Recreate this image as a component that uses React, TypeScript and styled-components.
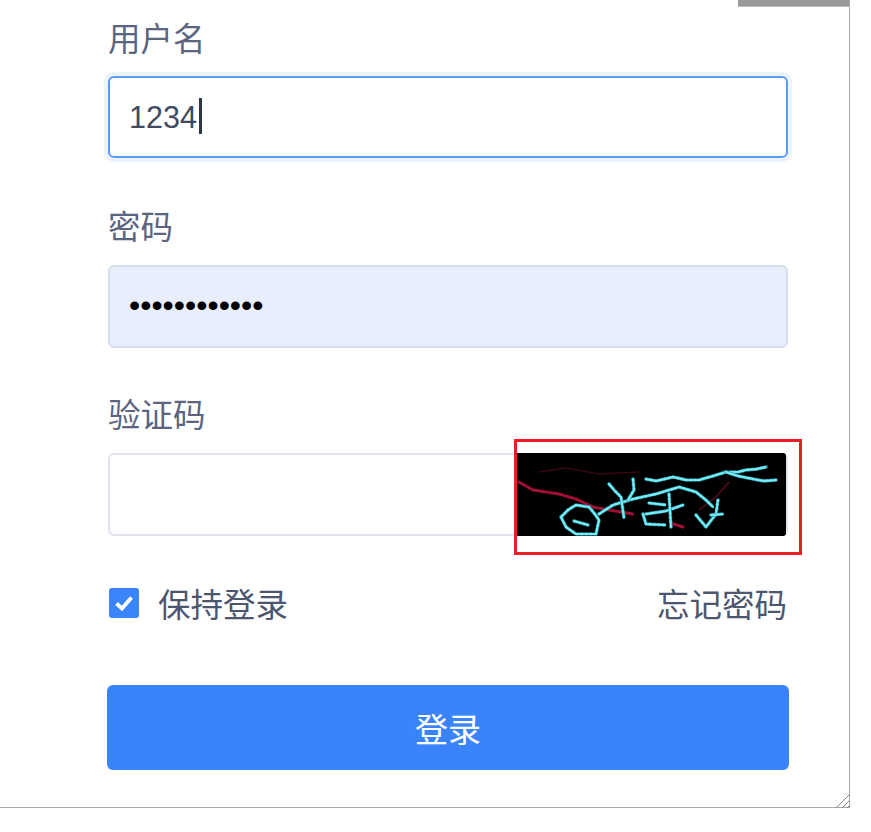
import styled, { createGlobalStyle } from 'styled-components'

const GlobalStyle = createGlobalStyle`
	html, body {
		margin: 0;
		padding: 0;
		background: #fff;
		overflow: hidden;
	}
`

const Window = styled.div`
	position: relative;
	box-sizing: border-box;
	width: 850px;
	height: 808px;
	padding: 19px 0 0 107px;
	border-right: 1px solid #a8a8a8;
	border-bottom: 1px solid #a8a8a8;
	font-family: 'Noto Sans CJK SC', 'Liberation Sans', sans-serif;
`

const ScrollThumb = styled.div`
	position: absolute;
	top: 0;
	right: 0;
	width: 111px;
	height: 6px;
	background: #999;
	box-shadow: 0 1px 0 #bbb;
`

const ResizeGrip = styled.svg`
	position: absolute;
	right: -2px;
	bottom: -2px;
	width: 16px;
	height: 16px;
`

const Form = styled.form`
	display: flex;
	flex-direction: column;
	width: 682px;
`

const Group = styled.div`
	margin-bottom: 47px;
`

const Label = styled.div`
	height: 40px;
	margin-bottom: 18px;
	padding-left: 1px;
	font-size: 32.5px;
	line-height: 36px;
	color: #5b6480;
`

const Field = styled.div<{ $state?: 'focus' | 'filled' }>`
	position: relative;
	display: flex;
	align-items: center;
	box-sizing: border-box;
	height: ${p => (p.$state === 'focus' ? '82px' : '83px')};
	margin: ${p => (p.$state === 'focus' ? '-1px 1px 2px' : '0 1px')};
	padding: 0 0 2px 19px;
	border-radius: 6px;
	border: 2px solid
		${p => (p.$state === 'focus' ? '#5b9bf5' : p.$state === 'filled' ? '#d7ddee' : '#e1e3ef')};
	background: ${p => (p.$state === 'filled' ? '#e8eefb' : '#fff')};
	box-shadow: ${p => (p.$state === 'focus' ? '0 0 0 4px #ebf3ff' : 'none')};
`

const Value = styled.span`
	margin-top: 2px;
	font-family: 'Liberation Sans', Arial, sans-serif;
	font-size: 30.5px;
	color: #3f4a60;
`

const Dots = styled.span`
	font-family: 'Liberation Sans', Arial, sans-serif;
	font-size: 32px;
	color: #000;
`

const Caret = styled.span`
	width: 3px;
	height: 36px;
	margin-left: 2px;
	background: #2d3748;
`

const Captcha = styled.svg`
	position: absolute;
	top: 0;
	right: 0;
	width: 270px;
	height: 83px;
	transform: translateY(-2px);
	background: #000;
	border-radius: 0 3px 3px 0;
`

const RedBox = styled.div`
	position: absolute;
	top: -16px;
	right: -16px;
	width: 288px;
	height: 116px;
	box-sizing: border-box;
	border: 3px solid #ee1c25;
`

const OptionsRow = styled.div`
	display: flex;
	align-items: center;
	justify-content: space-between;
	height: 38px;
	margin: 0 2px 64px 2px;
`

const Remember = styled.label`
	display: flex;
	align-items: center;
	gap: 19px;
	font-size: 32.5px;
	color: #4c566e;
`

const Checkbox = styled.span`
	display: flex;
	align-items: center;
	justify-content: center;
	width: 30px;
	height: 30px;
	margin-top: 2px;
	border-radius: 3px;
	background: #3a85fb;
`

const ForgotLink = styled.a`
	font-size: 32.5px;
	color: #4c566e;
`

const SubmitButton = styled.button`
	height: 85px;
	border: none;
	border-radius: 6px;
	background: #3984fb;
	font-family: inherit;
	font-size: 33px;
	color: #fff;
`

const cyanStrokes = [
	'M130 26 L140 28 L157 24 L170 27 L183 27 L197 23 L210 19 L222 19 L230 17 L241 16 L250 14',
	'M210 19 L222 23 L237 26 L248 28 L260 27',
	'M45 64 L52 57 L60 52 L73 54 L78 60 L83 67 L80 81 L60 81 L50 74 L45 64',
	'M58 68 L72 72',
	'M83 61 L97 52 L117 46 L140 41 L163 34 L180 39 L190 47 L197 54',
	'M93 31 L99 38 L105 44 L108 65',
	'M117 26 L118 37 L112 47',
	'M127 61 L130 71 L150 72',
	'M130 61 L150 58 L167 52',
	'M133 50 L150 52',
	'M153 41 L154 58 L155 74',
	'M180 62 L190 74 L200 61 L202 47',
	'M195 62 L207 61',
]

const redStrokes = [
	'M3 29 L17 37 L43 41 L60 46 L77 54 L93 57 L117 61',
	'M157 71 L167 74',
]

const App = () => (
	<>
		<GlobalStyle />
		<Window>
			<ScrollThumb />
			<Form>
				<Group>
					<Label>用户名</Label>
					<Field $state='focus'>
						<Value>1234</Value>
						<Caret />
					</Field>
				</Group>
				<Group>
					<Label>密码</Label>
					<Field $state='filled'>
						<Dots>••••••••••••</Dots>
					</Field>
				</Group>
				<Group>
					<Label>验证码</Label>
					<Field>
						<Captcha viewBox='0 0 270 83'>
							<path d='M23 19 L50 15 L83 21 L123 19' fill='none' stroke='#3a0612' strokeWidth='1.5' />
							<path d='M213 29 L200 44 L183 57' fill='none' stroke='#5c0a20' strokeWidth='1.5' />
							{redStrokes.map(d => (
								<path key={d} d={d} fill='none' stroke='#a01035' strokeWidth='3' strokeLinecap='round' strokeDasharray='5 1' />
							))}
							{cyanStrokes.map(d => (
								<g key={d}>
									<path d={d} fill='none' stroke='#2c8fa0' strokeWidth='3.6' strokeLinecap='round' strokeLinejoin='round' strokeDasharray='2 2.5' />
									<path d={d} fill='none' stroke='#74eef8' strokeWidth='2.2' strokeLinecap='round' strokeLinejoin='round' strokeDasharray='3 1.4' />
								</g>
							))}
						</Captcha>
						<RedBox />
					</Field>
				</Group>
				<OptionsRow>
					<Remember>
						<Checkbox>
							<svg width='22' height='22' viewBox='0 0 22 22'>
								<path d='M3.5 11.5 L9 16.5 L18.5 5.5' fill='none' stroke='#fff' strokeWidth='3.8' />
							</svg>
						</Checkbox>
						保持登录
					</Remember>
					<ForgotLink>忘记密码</ForgotLink>
				</OptionsRow>
				<SubmitButton type='button'>登录</SubmitButton>
			</Form>
			<ResizeGrip viewBox='0 0 16 16'>
				<path d='M1 15 L15 1 M7 15 L15 7 M12 15 L15 12' stroke='#888' strokeWidth='1' />
			</ResizeGrip>
		</Window>
	</>
)

export default App
